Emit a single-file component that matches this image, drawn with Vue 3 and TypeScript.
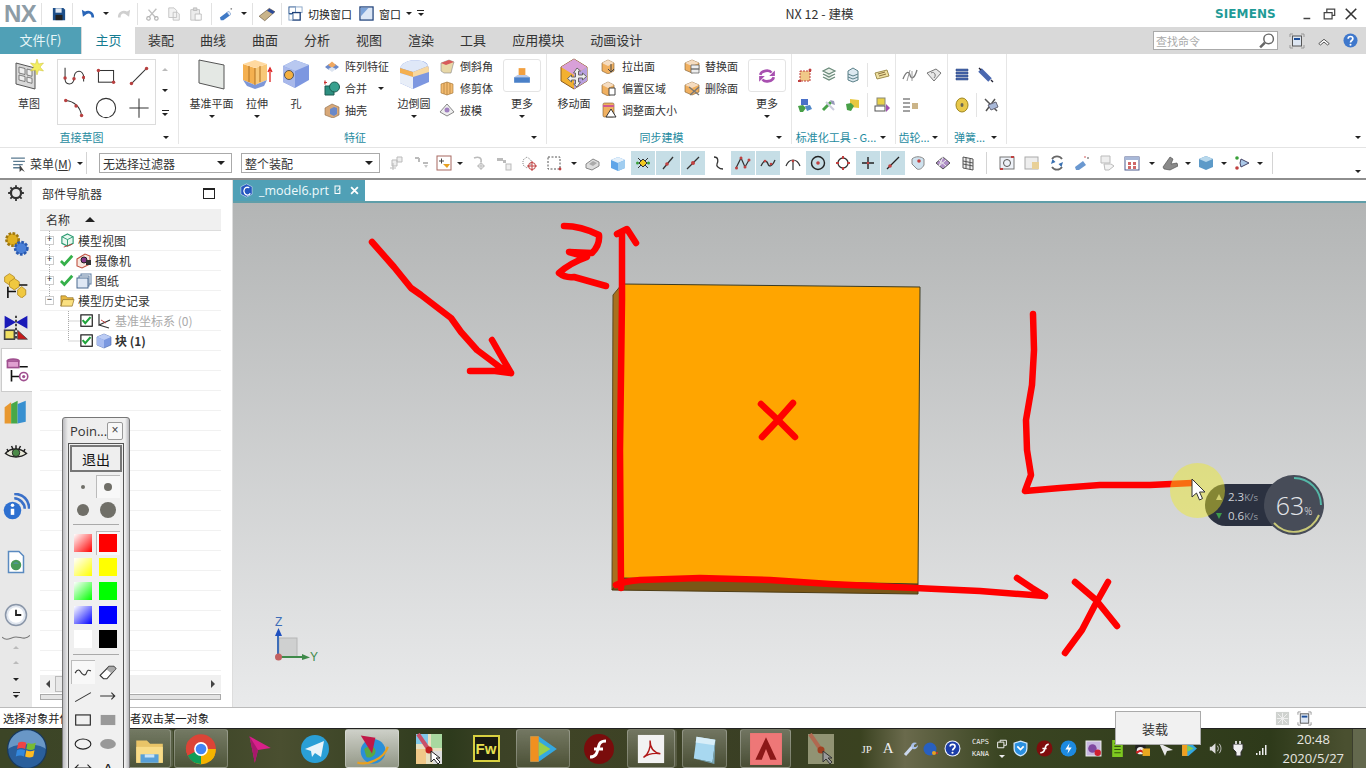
<template>
  <div class="app">
    <!-- title bar -->
    <header class="titlebar">
      <span class="nx">NX</span>
      <div class="qa qa-save"><Ico n="save" :s="14" /></div>
      <div class="qa qa-undo"><Ico n="undo" :s="14" /><i class="caret" /><Ico n="redo" :s="14" /></div>
      <div class="qa qa-clip"><Ico n="cut" :s="14" /><Ico n="copy" :s="14" /><Ico n="paste" :s="14" /></div>
      <div class="qa qa-brush"><Ico n="brush" :s="14" /><i class="caret" /></div>
      <div class="qa qa-roll"><Ico n="roll" :s="18" /></div>
      <div class="qa qa-win">
        <Ico n="switchWin" :s="15" />
        <span class="qa-text">切换窗口</span>
        <Ico n="winFrame" :s="15" class="qa-w2" />
        <span class="qa-text">窗口</span>
        <i class="caret" />
        <i class="overflow" />
      </div>
      <span class="apptitle">NX 12 - 建模</span>
      <span class="siemens">SIEMENS</span>
      <div class="winbtns">
        <Ico n="wMin" :s="12" />
        <Ico n="wRestore" :s="14" />
        <Ico n="wClose" :s="14" />
      </div>
    </header>

    <!-- ribbon tabs -->
    <nav class="tabs">
      <span class="tab-file">文件(F)</span>
      <span v-for="(t, i) in tabs" :key="t" class="tab" :class="{ on: i === 0 }">{{ t }}</span>
      <div class="tabs-right">
        <div class="search"><span>查找命令</span><Ico n="search" :s="17" /></div>
        <Ico n="fit" :s="16" />
        <Ico n="chev" :s="14" />
        <Ico n="help" :s="15" />
      </div>
    </nav>

    <!-- ribbon -->
    <section class="ribbon">
      <div class="group g1">
        <div class="gbody">
          <div class="lg w42"><Ico n="sketch" :s="32" /><span>草图</span></div>
          <div class="gallery">
            <span v-for="g in gallery" :key="g" class="gcell"><Ico :n="g" :s="22" /></span>
          </div>
          <div class="gscroll"><i class="caret up" /><i class="caret" /><i class="overflow" /></div>
        </div>
        <div class="glabel"><span>直接草图</span><i class="caret" /></div>
      </div>

      <div class="group g2">
        <div class="gbody">
          <div class="lg w44"><Ico n="plane" :s="32" /><span>基准平面</span><i class="caret" /></div>
          <div class="lg w46"><Ico n="extrude" :s="32" /><span>拉伸</span><i class="caret" /></div>
          <div class="lg w32"><Ico n="hole" :s="32" /><span>孔</span></div>
          <div class="col c1">
            <div class="sm"><Ico n="pattern" /><span>阵列特征</span></div>
            <div class="sm"><Ico n="unite" /><span>合并</span><i class="caret" /></div>
            <div class="sm"><Ico n="shell" /><span>抽壳</span></div>
          </div>
          <div class="lg w40"><Ico n="blend" :s="32" /><span>边倒圆</span><i class="caret" /></div>
          <div class="col c2">
            <div class="sm"><Ico n="chamfer" /><span>倒斜角</span></div>
            <div class="sm"><Ico n="trim" /><span>修剪体</span></div>
            <div class="sm"><Ico n="draft" /><span>拔模</span></div>
          </div>
          <div class="lg w38 more">
            <div class="morebox"><Ico n="stamp" :s="18" /></div>
            <span>更多</span><i class="caret" />
          </div>
        </div>
        <div class="glabel"><span>特征</span><i class="caret" /></div>
      </div>

      <div class="group g3">
        <div class="gbody">
          <div class="lg w50"><Ico n="moveFace" :s="32" /><span>移动面</span></div>
          <div class="col c3">
            <div class="sm"><Ico n="pull" /><span>拉出面</span></div>
            <div class="sm"><Ico n="offset" /><span>偏置区域</span></div>
            <div class="sm"><Ico n="resize" /><span>调整面大小</span></div>
          </div>
          <div class="col c4">
            <div class="sm"><Ico n="replace" /><span>替换面</span></div>
            <div class="sm"><Ico n="del" /><span>删除面</span></div>
          </div>
          <div class="lg w38 more">
            <div class="morebox"><Ico n="sync" :s="18" /></div>
            <span>更多</span><i class="caret" />
          </div>
        </div>
        <div class="glabel"><span>同步建模</span><i class="caret" /></div>
      </div>

      <div class="group g4">
        <div class="gbody icons2">
          <div class="irow"><Ico n="s1" /><Ico n="s2" /><Ico n="s3" /><i class="vsep" /><Ico n="s4" /></div>
          <div class="irow"><Ico n="s5" /><Ico n="s6" /><Ico n="s7" /><i class="vsep" /><Ico n="s8" /></div>
        </div>
        <div class="glabel"><span>标准化工具 - G...</span><i class="caret" /></div>
      </div>

      <div class="group g5">
        <div class="gbody icons2">
          <div class="irow"><Ico n="g1" /><Ico n="g2" /></div>
          <div class="irow"><Ico n="g3" /></div>
        </div>
        <div class="glabel"><span>齿轮...</span><i class="caret" /></div>
      </div>

      <div class="group g6">
        <div class="gbody icons2">
          <div class="irow"><Ico n="sp1" /><Ico n="sp2" /></div>
          <div class="irow"><Ico n="sp3" /><i class="vsep" /><Ico n="sp4" /></div>
        </div>
        <div class="glabel"><span>弹簧...</span><i class="caret" /></div>
      </div>

      <div class="gend"><i class="caret" /></div>
    </section>

    <!-- selection bar -->
    <section class="selbar">
      <Ico n="menu" :s="17" />
      <span class="menu-text">菜单(<u>M</u>)</span>
      <i class="caret" />
      <i class="tsep first" />
      <div class="combo c-a"><span>无选择过滤器</span><i class="caret" /></div>
      <div class="combo c-b"><span>整个装配</span><i class="caret" /></div>
      <div class="tools">
        <template v-for="(t, i) in tools" :key="i">
          <i v-if="t === '|'" class="tsep" />
          <i v-else-if="t === 'v'" class="caret tcaret" />
          <span v-else class="tcell" :class="toolClass(t)"><Ico :n="toolName(t)" /></span>
        </template>
      </div>
      <i class="caret end" />
    </section>

    <!-- main area -->
    <main class="main">
      <aside class="rail">
        <span class="r-gear"><Ico n="rGear" :s="18" /></span>
        <span class="r-blank" />
        <span><Ico n="rAsm" :s="28" /></span>
        <span><Ico n="rCon" :s="26" /></span>
        <span><Ico n="rBow" :s="26" /></span>
        <span class="r-on"><Ico n="rPart" :s="26" /></span>
        <span><Ico n="rBook" :s="26" /></span>
        <span><Ico n="rEye" :s="24" /></span>
        <span><Ico n="rInfo" :s="28" /></span>
        <span><Ico n="rDoc" :s="24" /></span>
        <span class="r-blank2" />
        <span><Ico n="rClock" :s="24" /></span>
        <span class="r-wave"><Ico n="rWave" :s="28" /></span>
        <span class="r-sm"><i class="caret up" /></span>
        <span class="r-sm"><i class="caret up" /></span>
        <span class="r-sm"><i class="caret" /></span>
        <span class="r-sm"><i class="overflow" /></span>
      </aside>

      <div class="nav">
        <div class="nav-title"><span>部件导航器</span><i class="nav-max" /></div>
        <div class="tree">
          <div class="tree-head"><span>名称</span><i class="caret up dark" /></div>
          <div class="tree-body">
            <svg class="tree-lines" width="60" height="120" viewBox="0 0 60 120">
              <path d="M9.5 0V70M28.5 80V110M28.5 90H40M28.5 110H40" stroke="#aaa" stroke-dasharray="1 1" fill="none" />
            </svg>
            <div v-for="(r, i) in rows" :key="i" class="row" :class="[r.cls]">
              <template v-if="r.text">
                <b v-if="r.exp" class="exp">{{ r.exp }}</b>
                <Ico v-if="r.check" :n="r.check" :s="14" />
                <Ico :n="r.icon" :s="r.check ? 16 : 15" />
                <span class="row-text">{{ r.text }}</span>
              </template>
            </div>
          </div>
          <div class="hscroll"><i class="tri l" /><i class="thumb" /><i class="tri r" /></div>
          <div class="hfoot" />
        </div>
      </div>

      <div class="view">
        <div class="doc-tabs">
          <div class="doc-tab">
            <Ico n="prt" :s="15" />
            <span>_model6.prt</span>
            <Ico n="docEdit" :s="11" />
            <Ico n="docX" :s="9" />
          </div>
        </div>
        <div class="canvas" />
      </div>
    </main>

    <!-- status bar -->
    <footer class="status">
      <span>选择对象并使用 MB3，或者双击某一对象</span>
      <div class="status-r"><Ico n="stGrid" :s="15" /><Ico n="fit" :s="15" /></div>
    </footer>

    <!-- taskbar -->
    <div class="taskbar">
      <span class="orb"><Ico n="orb" :s="40" /></span>
      <span class="tb-btn t-exp framed"><Ico n="tFolder" :s="34" /></span>
      <span class="tb-btn t-chrome framed"><Ico n="tChrome" :s="34" /></span>
      <span class="tb-btn"><Ico n="tPlane" :s="34" /></span>
      <span class="tb-btn"><Ico n="tTele" :s="32" /></span>
      <span class="tb-btn framed active"><Ico n="tGlobe" :s="36" /></span>
      <span class="tb-btn"><Ico n="tMap" :s="32" /></span>
      <span class="tb-btn"><span class="fw">Fw</span></span>
      <span class="tb-btn t-play framed"><Ico n="tPlay" :s="34" /></span>
      <span class="tb-btn t-flash"><Ico n="tFlash" :s="32" /></span>
      <span class="tb-btn t-pdf framed"><Ico n="tPdf" :s="30" /></span>
      <span class="tb-btn t-note framed"><Ico n="tNote" :s="30" /></span>
      <span class="tb-btn t-cad framed"><Ico n="tCad" :s="34" /></span>
      <span class="tb-btn t-map2"><Ico n="tMap2" :s="32" /></span>

      <div class="tray">
        <span class="tr-a tr-jp">JP</span>
        <span class="tr-a tr-capA">A</span>
        <span class="tr-a"><Ico n="trWrench" :s="16" /></span>
        <span class="tr-a"><Ico n="trDot" :s="16" /></span>
        <span class="tr-a"><Ico n="trHelp" :s="17" /></span>
        <span class="tr-caps"><b>CAPS</b><b>KANA</b></span>
        <span class="tr-capsico"><Ico n="trWin" :s="10" /><i class="caret white" /></span>
        <span class="tr-b"><Ico n="trShield" :s="17" /></span>
        <span class="tr-b"><Ico n="trFlash" :s="17" /></span>
        <span class="tr-b"><Ico n="trSwirl" :s="17" /></span>
        <span class="tr-b"><Ico n="trMusic" :s="17" /></span>
        <span class="tr-b"><Ico n="trBook" :s="17" /></span>
        <span class="tr-b"><Ico n="trQQ" :s="17" /></span>
        <span class="tr-b"><Ico n="trPlane" :s="16" /></span>
        <span class="tr-b"><Ico n="trPlay" :s="17" /></span>
        <span class="tr-b"><Ico n="trSpk" :s="15" /></span>
        <span class="tr-b"><Ico n="trPow" :s="16" /></span>
        <span class="tr-b"><Ico n="trSig" :s="16" /></span>
      </div>
      <div class="clock"><span>20:48</span><span>2020/5/27</span></div>
      <span class="showdesk" />
    </div>

    <!-- model and hand drawn marks in the graphics window -->
    <svg class="scene" width="1366" height="768" viewBox="0 0 1366 768">
      <path d="M613 295L622 284V578L612 590Z" fill="#a8701f" stroke="#5c4a20" />
      <path d="M612 590L622 578L918 584V594Z" fill="#7a5616" stroke="#4d3c14" />
      <path d="M622 284L920 287L918 584L622 578Z" fill="#ffa500" stroke="#3a3a22" />

      <g class="triad">
        <rect x="279" y="638" width="18" height="19" fill="#cfd0d0" stroke="#b5b6b6" />
        <path d="M278 657V632" stroke="#3d6db8" stroke-width="2" />
        <path d="M275 636L278.5 628L282 636Z" fill="#1f50c0" />
        <path d="M278 657H304" stroke="#3f8a4a" stroke-width="2" />
        <path d="M302 654L310 657.5L302 660Z" fill="#3f8a4a" />
        <circle cx="278.5" cy="657" r="3.5" fill="#c26060" />
        <text x="275" y="626" class="tz">Z</text>
        <text x="310" y="661" class="ty">Y</text>
      </g>

      <g class="ink">
        <path d="M372 242L394 267L411 288L421 295L434 305L451 318L461 332L477 350L501 368L511 373M470 371L495 371L511 373M492 340L500 354L511 373" />
        <path d="M564 226Q581 226 599 235Q600 245 592 253L569 252L587 257Q570 263 559 273Q565 278 574 277L606 286" />
        <path d="M621 588L620 450L622 300L622 233M617 234L627 229L636 243" />
        <path d="M616 585Q625 581 640 580L700 578L770 580L830 584L915 588L980 591L1045 596M1017 578L1032 588L1045 596" />
        <path d="M1075 582L1096 600L1117 626M1108 582L1095 605L1082 630L1065 653" />
        <path d="M761 404L778 420L795 437M793 403L778 420L762 437" />
        <path d="M1033 314L1034 350L1032 385L1026 420L1027 450L1031 475L1025 491L1060 488L1100 485L1150 485L1192 483" />
      </g>
    </svg>

    <!-- network meter -->
    <div class="meter">
      <div class="meter-rates">
        <div class="rate"><i class="arrow up" /><span>2.3<small>K/s</small></span></div>
        <div class="rate"><i class="arrow" /><span>0.6<small>K/s</small></span></div>
      </div>
      <div class="meter-dial">
        <svg width="60" height="60" viewBox="0 0 60 60">
          <path d="M30 3A27 27 0 0 1 57 30" stroke="#55b8a8" stroke-width="2" fill="none" />
          <path d="M55 40A27 27 0 0 1 10 48" stroke="#c8c878" stroke-width="2" fill="none" />
        </svg>
        <span>63<small>%</small></span>
      </div>
    </div>
    <div class="spot" />
    <svg class="cursor" width="16" height="24" viewBox="0 0 16 24">
      <path d="M1 1V19L5.5 15L8.5 22L11.5 20.5L8.5 14H14Z" fill="#fff" stroke="#333" />
    </svg>

    <!-- pointofix palette -->
    <div class="palette">
      <div class="pal-title"><span>Poin...</span><i class="pal-close">×</i></div>
      <div class="pal-inner">
        <button class="pal-exit">退出</button>
        <div class="pal-grid">
          <span class="cell"><i class="dot d1" /></span>
          <span class="cell sel"><i class="dot d2" /></span>
          <span class="cell"><i class="dot d3" /></span>
          <span class="cell"><i class="dot d4" /></span>
        </div>
        <hr />
        <div class="pal-grid swatches">
          <template v-for="(c, i) in swatches" :key="i">
            <span class="cell"><i class="sw" :style="{ background: c[0] }" /></span>
            <span class="cell" :class="{ sel: i === 0 }"><i class="sw" :style="{ background: c[1] }" /></span>
          </template>
        </div>
        <hr />
        <div class="pal-grid pal-tools">
          <span class="cell sel"><Ico n="pSquig" :s="18" /></span>
          <span class="cell"><Ico n="pErase" :s="18" /></span>
          <span class="cell"><Ico n="pLine" :s="18" /></span>
          <span class="cell"><Ico n="pArrow" :s="18" /></span>
          <span class="cell"><Ico n="pRect" :s="18" /></span>
          <span class="cell"><Ico n="pRectF" :s="18" /></span>
          <span class="cell"><Ico n="pOval" :s="18" /></span>
          <span class="cell"><Ico n="pOvalF" :s="18" /></span>
          <span class="cell"><Ico n="pBoth" :s="18" /></span>
          <span class="cell pal-a">A</span>
        </div>
      </div>
    </div>

    <div class="tooltip">装载</div>
  </div>
</template>

<script setup lang="ts">
import { h } from 'vue'

// every icon is 16 units unless it is listed in big (32 units)
const ic: Record<string, string> = {
  save: '<path fill="#1d4f8a" d="M1 1h12l2 2v12H1z"/><rect x="4" y="1.5" width="7" height="5" fill="#dfe8f2"/><rect x="4" y="9" width="8" height="6" fill="#222"/>',
  undo: '<path d="M13.5 12C13.5 6.5 9 4.5 4.5 7" stroke="#2a66b8" stroke-width="3" fill="none"/><path d="M1 3l1.2 8 5.6-4z" fill="#2a66b8"/>',
  redo: '<path d="M2.5 12C2.5 6.5 7 4.5 11.500 7" stroke="#cfcfcf" stroke-width="3" fill="none"/><path d="M15 3l-1.200 8-5.600-4z" fill="#cfcfcf"/>',
  cut: '<path d="M13 2L5 11M4 3l8 9" stroke="#c0c0c0" stroke-width="1.6"/><circle cx="4" cy="13" r="2" fill="none" stroke="#b0b0b0" stroke-width="1.300"/><circle cx="13" cy="13" r="2" fill="none" stroke="#b0b0b0" stroke-width="1.300"/>',
  copy: '<path d="M2 1h6l3 3v8H2zM7 6h5l2 2v7H7z" fill="#f2f2f2" stroke="#c0c0c0"/>',
  paste: '<path d="M2 3h10v12H2z" fill="#ececec" stroke="#c0c0c0"/><path d="M5 1h4v3H5z" fill="#d8d8d8" stroke="#bbb"/><path d="M7 8h7v7H7z" fill="#fafafa" stroke="#bbb"/>',
  brush: '<path d="M1 12l8-6 3 4-7 5H2z" fill="#3f79c6"/><path d="M9 6l3 4 1.500-2-2-3z" fill="#e6efff" stroke="#3a6db0" stroke-width=".5"/><circle cx="14" cy="2" r="1" fill="#888"/>',
  roll: '<path d="M1 10l9-7 5 3-9 8z" fill="#c9b48a" stroke="#6a5a40" stroke-width=".6"/><path d="M8 5l5 3 2-2-5-3z" fill="#2c4b9a"/>',
  switchWin: '<rect x="1" y="1" width="7" height="7" fill="#fff" stroke="#28558f"/><rect x="8" y="1" width="7" height="6" fill="#fff" stroke="#8aa6c7"/><rect x="5" y="7" width="8" height="8" fill="#fff" stroke="#1c3f78" stroke-width="1.400"/><rect x="1" y="9" width="4" height="6" fill="#fff" stroke="#8aa6c7"/>',
  winFrame: '<rect x="1" y="1" width="14" height="14" fill="#dbe6f5" stroke="#1c3f78" stroke-width="1.300"/><path d="M2 2h8L2 11z" fill="#7aa2d8"/>',
  wMin: '<path d="M2 14h9" stroke="#444" stroke-width="2"/>',
  wRestore: '<path d="M2.500 6.500h9v7h-9zM5.500 6V2.500h9v7H12" fill="none" stroke="#444" stroke-width="1.400"/>',
  wClose: '<path d="M2 2l12 12M14 2L2 14" stroke="#333" stroke-width="1.800"/>',
  search: '<circle cx="10" cy="6.500" r="4.500" fill="#fff" stroke="#666" stroke-width="1.400"/><path d="M6.500 10L2 14.500" stroke="#666" stroke-width="2.400"/>',
  fit: '<path d="M1 4V1h3M12 1h3v3M15 12v3h-3M4 15H1v-3" fill="none" stroke="#999"/><rect x="3.500" y="3" width="9" height="10" fill="#dde6f2" stroke="#555"/><rect x="5" y="5" width="6" height="2" fill="#1d4f9a"/>',
  chev: '<path d="M2 11l6-5 6 5-2 1.500-4-3.300-4 3.300z" fill="#fff" stroke="#444" stroke-width="1"/>',
  help: '<circle cx="8" cy="8" r="7.500" fill="#3f78cc"/><path d="M5.500 6c0-3 5-3 5 0 0 2-2.500 2-2.500 4" stroke="#fff" stroke-width="1.800" fill="none"/><circle cx="8" cy="12.500" r="1.100" fill="#fff"/>',
  pattern: '<path d="M1 9l4-3 4 3-4 3z" fill="#6a88c8"/><path d="M7 9l4-3 4 3-4 3z" fill="#6a88c8"/><path d="M4 7l4-3.500L12 7 8 10z" fill="#f0a860"/><path d="M4 11l4 3 4-3-4-2z" fill="#dce4f0"/>',
  unite: '<path d="M1 6h9v9H1z" fill="#2d8f80" stroke="#1d5a50"/><circle cx="10.500" cy="7" r="5" fill="#38a08e" stroke="#1d5a50"/><path d="M1 0.500v4M-1 2.500h4" stroke="#c33" stroke-width="1.200"/>',
  shell: '<path d="M1 6l7-4 7 3v8l-6 3-8-3z" fill="#d8a878" stroke="#8a6a48" stroke-width=".6"/><path d="M6 7l4-2 3 1v6l-3 2-4-2z" fill="#6a88c8"/>',
  chamfer: '<path d="M2 5l8-3 5 2-1 3-2 8H5L2 13z" fill="#e8d8a8" stroke="#888" stroke-width=".6"/><path d="M2 5l8-3 5 2-8 3z" fill="#d85a5a"/>',
  trim: '<path d="M2 4l6-2 6 2v9l-6 2-6-2z" fill="#f3bb70" stroke="#a07030" stroke-width=".6"/><path d="M8 2v13M11 3v11M5 3v11" stroke="#a07030" stroke-width=".6"/>',
  draft: '<path d="M8 2l7 8-7 4-7-4z" fill="#eee" stroke="#888"/><circle cx="8" cy="8" r="2.500" fill="#a080c0"/>',
  pull: '<path d="M1 5l6-3 6 3v8l-6 3-6-3z" fill="#f0b060" stroke="#7a5a30" stroke-width=".6"/><path d="M7 2l6 3-6 3-6-3z" fill="#f5dcc0"/><path d="M10 6v8M7 11l3 3 3-3" stroke="#444" fill="none"/>',
  offset: '<path d="M1 5l6-3 6 3v8l-6 3-6-3z" fill="#f0b060" stroke="#7a5a30" stroke-width=".6"/><path d="M7 2l6 3-6 3-6-3z" fill="#f5dcc0"/><path d="M8 8h6v7H8z" fill="#fff" stroke="#444"/>',
  resize: '<rect x="2" y="1" width="11" height="14" rx="1.500" fill="#f0b060" stroke="#7a5a30" stroke-width=".6"/><path d="M2 4h11" stroke="#d05a90" stroke-width="2"/><path d="M5 15l5-8 5 8z" fill="#fff" stroke="#333"/>',
  replace: '<path d="M1 5l7-3 7 3v7l-7 3-7-3z" fill="#f0b060" stroke="#7a5a30" stroke-width=".6"/><path d="M8 2l7 3-7 3-7-3z" fill="#f5dcc0"/><path d="M7 7h8v4H7zM7 11h8v4H7z" fill="#eee" stroke="#555" stroke-width=".7"/>',
  del: '<path d="M1 5l7-3 7 3v7l-7 3-7-3z" fill="#f0b060" stroke="#7a5a30" stroke-width=".6"/><path d="M8 2l7 3-7 3-7-3z" fill="#f5dcc0"/><path d="M5 7l10 8M15 7L6 15" stroke="#777" stroke-width="1.300"/>',
  stamp: '<path d="M5 1h6v7H5z" fill="#f2a040"/><path d="M1 9h14v5H1z" fill="#4a80c8"/><path d="M1 9l3-2h8l3 2z" fill="#b8c8e8"/>',
  sync: '<path d="M2 7c1-4 8-5 10-2" stroke="#a850b0" stroke-width="2.400" fill="none"/><path d="M15 3v5h-5z" fill="#a850b0"/><path d="M14 9c-1 4-8 5-10 2" stroke="#a850b0" stroke-width="2.400" fill="none"/><path d="M1 13V8h5z" fill="#a850b0"/>',
  s1: '<rect x="3" y="4" width="10" height="10" fill="#f0c888" stroke="#c04040" stroke-dasharray="2 1"/><path d="M1 14h3M13 2v3" stroke="#c04040" stroke-width="2"/><circle cx="13" cy="3" r="1.500" fill="#c04040"/>',
  s2: '<path d="M8 1l6 3-6 3-6-3zM2 7l6 3 6-3M2 10l6 3 6-3" fill="#e8efe8" stroke="#6a8a7a" stroke-width="1.200"/>',
  s3: '<path d="M3 4l5-3 5 3v9l-5 2-5-2z" fill="#dce8f0" stroke="#5a8088"/><path d="M3 7l5 2 5-2M3 10l5 2 5-2" fill="none" stroke="#5a8088"/>',
  s4: '<path d="M1 6l12-3 2 6-12 3z" fill="#efe0a0" stroke="#a09050"/><path d="M4 7l7-2M5 9l7-2" stroke="#887040"/>',
  s5: '<path d="M4 2h7v6H4z" fill="#4a70c8"/><path d="M1 9l5-1 3 3-3 4H3z" fill="#48a048"/><path d="M8 9l5-1 2 4-5 2z" fill="#5088c8"/>',
  s6: '<path d="M2 13L10 5" stroke="#48a048" stroke-width="3"/><path d="M9 3l4 1 1 4-3-1z" fill="#99b"/><path d="M5 5l8 8" stroke="#ccd" stroke-width="2"/>',
  s7: '<path d="M5 2l9 1v8l-9-1z" fill="#e8c840"/><path d="M1 7l5-1 3 3-3 5-4-1z" fill="#48a048"/>',
  s8: '<rect x="3" y="1" width="8" height="7" fill="#e8d048" stroke="#887"/><rect x="1" y="9" width="10" height="5" fill="#fff" stroke="#555"/><path d="M12 7l4 4-4 4z" fill="#a050b0"/>',
  g1: '<path d="M1 12C4 4 7 4 8 8s4 5 7-5" fill="none" stroke="#777" stroke-width="1.300"/><path d="M5 14L8 3M10 14V4" stroke="#999"/>',
  g2: '<path d="M1 6l9-4 5 4-7 8z" fill="#e8e8e8" stroke="#777"/><path d="M5 6c3-2 6 2 3 5" stroke="#777" fill="none"/>',
  g3: '<path d="M1 2h7M1 6h7M1 10h7M1 14h7" stroke="#444"/><path d="M10 6h6v6h-6z" fill="#cbb488"/>',
  sp1: '<path d="M2 2h12v2H2zM2 5h12v2H2zM2 8h12v2H2zM2 11h12v2H2z" fill="#4a68b0" stroke="#26407a" stroke-width=".5"/>',
  sp2: '<path d="M2 3l10 10" stroke="#4a68b0" stroke-width="5"/><path d="M1 1l2 2M13 13l2 2" stroke="#223" stroke-width="1.400"/>',
  sp3: '<ellipse cx="8" cy="8" rx="6" ry="7" fill="#e8c84a" stroke="#a08820"/><ellipse cx="8" cy="8" rx="1.500" ry="2" fill="#665"/>',
  sp4: '<path d="M2 2l12 12M12 2L3 14" stroke="#555" stroke-width="1.500"/><path d="M5 8l8-3 2 5-7 3z" fill="#a8b8d8" stroke="#667"/>',
  menu: '<path d="M1 3h13M3 6h11M3 9h9M3 12h7" stroke="#5a7a90" stroke-width="1.200"/><path d="M9 9v7l2-2 3 2" fill="#444"/>',
  t1: '<path d="M3 5h5v6H3zM8 2h5v5H8z" fill="#eee" stroke="#bbb"/><path d="M1 13h6M4 8v7" stroke="#bbb"/>',
  t2: '<path d="M1 3h4M9 8h5M5 3v4" stroke="#bbb" stroke-width="2"/><path d="M10 10l4 0-2 3z" fill="#c8c8c8"/>',
  t3: '<rect x="1" y="1" width="14" height="14" fill="#fff" stroke="#a86860"/><path d="M3 6h5M5.500 3.500v5" stroke="#444"/><path d="M7 9h7l-3 4z" fill="#e8a020"/>',
  t4: '<path d="M3 3C8 1 11 3 10 7" stroke="#bbb" fill="none" stroke-width="1.500"/><path d="M10 6v9M6 11h8" stroke="#bbb"/><circle cx="10" cy="11" r="2.500" fill="none" stroke="#bbb"/>',
  t5: '<path d="M1 3h6v3H1zM7 5h3v3H7z" fill="#bbb"/><rect x="10" y="9" width="5" height="6" fill="#eee" stroke="#bbb"/>',
  t6: '<path d="M2 5l4-3 4 3v5l-4 3-4-3z" fill="none" stroke="#888" stroke-dasharray="1 1"/><circle cx="11" cy="11" r="3.500" fill="none" stroke="#c04040"/><path d="M11 6v10M6 11h10" stroke="#c04040"/>',
  t7: '<rect x="2" y="2" width="12" height="12" fill="none" stroke="#555" stroke-dasharray="2 1.500"/><circle cx="14" cy="14" r="1.400" fill="#c04040"/>',
  t8: '<path d="M1 9l7-5 6 3v4l-7 4-6-2z" fill="#ddd" stroke="#888"/><path d="M4 9l4-3 4 2-4 3z" fill="#aaa"/>',
  t9: '<path d="M1 5l7-3 7 3v8l-7 3-7-3z" fill="#5fa5e8"/><path d="M1 5l7-3 7 3-7 3z" fill="#e4f0fa"/><path d="M8 8v8l7-3V5z" fill="#a0cdf0"/>',
  t10: '<path d="M8 8L3 3M8 8l5-5M8 8L3 13M8 8l5 5" stroke="#333"/><path d="M8 4l4 4-4 4-4-4z" fill="#f0c820" stroke="#333"/><circle cx="2.500" cy="8" r="1.500" fill="#38a038"/><circle cx="13.500" cy="8" r="1.500" fill="#38a038"/>',
  t11: '<path d="M3 14L13 2" stroke="#333" stroke-width="1.300"/><circle cx="7" cy="9" r="1.800" fill="#c04040"/>',
  t12: '<path d="M2 14L14 2" stroke="#333" stroke-width="1.300"/><circle cx="8" cy="8" r="2" fill="#c04040"/>',
  t13: '<path d="M4 2c5 0 4 5 3 7s2 5 6 5" stroke="#333" stroke-width="1.300" fill="none"/>',
  t14: '<path d="M1 13L6 3l4 9 4-7" stroke="#333" fill="none" stroke-width="1.200"/><circle cx="6" cy="3" r="1.500" fill="#c04040"/><circle cx="10" cy="12" r="1.500" fill="#c04040"/><circle cx="1.500" cy="13" r="1.500" fill="#c04040"/><circle cx="14" cy="5" r="1.500" fill="#c04040"/>',
  t15: '<path d="M1 11c3-7 6-5 7-2s4 3 7-4" stroke="#333" stroke-width="1.300" fill="none"/><circle cx="5" cy="6" r="1.300" fill="#c04040"/><circle cx="11" cy="9" r="1.300" fill="#c04040"/>',
  t16: '<path d="M8 7v8M1 11C3 6 5 5 8 5s5 1 7 6" stroke="#333" fill="none" stroke-width="1.200"/><circle cx="8" cy="6" r="1.300" fill="#c04040"/>',
  t17: '<circle cx="8" cy="8" r="6.500" fill="none" stroke="#222" stroke-width="1.400"/><circle cx="8" cy="8" r="1.800" fill="#c04040"/>',
  t18: '<circle cx="8" cy="8" r="5" fill="none" stroke="#333" stroke-width="1.300"/><path d="M1 8h3M12 8h3M8 1v3M8 12v3" stroke="#c04040" stroke-width="2"/>',
  t19: '<path d="M2 8h12M8 2v12" stroke="#222" stroke-width="1.400"/><circle cx="8" cy="8" r="1.300" fill="#c04040"/>',
  t20: '<path d="M2 14L14 2" stroke="#222" stroke-width="1.300"/><circle cx="5" cy="11" r="1.800" fill="#c04040"/>',
  t21: '<path d="M2 4c3-3 9-3 12 0v6c-2 4-5 5-7 4l-5-5z" fill="#cfe2ee" stroke="#888"/><circle cx="9" cy="6" r="1.800" fill="#c04040"/>',
  t22: '<path d="M1 8l7-6 7 6-7 6z" fill="#b090c8" stroke="#555"/><path d="M4 5l7 6M8 2l-4 9M11 5l-7 6" stroke="#eee"/>',
  t23: '<path d="M3 2l10 2v11L3 13z" fill="#eee" stroke="#555"/><path d="M3 6l10 2M3 9l10 2M6 2.500v11M10 3.500v11" stroke="#555"/>',
  t24: '<rect x="1" y="2" width="14" height="12" fill="#eef2f8" stroke="#777"/><circle cx="8" cy="8" r="3.500" fill="none" stroke="#555"/><path d="M1 14h3M12 2h3" stroke="#c04040" stroke-width="2"/>',
  t25: '<rect x="1" y="2" width="13" height="12" fill="#eee" stroke="#aaa"/><path d="M8 7h7v7H8z" fill="#e8d098"/>',
  t26: '<path d="M3 4a6 6 0 0 1 10 0M13 12a6 6 0 0 1-10 0" fill="none" stroke="#666" stroke-width="1.800"/><path d="M2 9l1.500-5 3 3zM14 7l-1.500 5-3-3z" fill="#3a70b0"/>',
  t27: '<path d="M1 12l8-6 3 4-7 5H2z" fill="#6a98d0"/><circle cx="14" cy="3" r="1" fill="#888"/><circle cx="11" cy="2" r=".8" fill="#c44"/>',
  t28: '<path d="M2 1h9v7H2z" fill="#eee" stroke="#bbb"/><path d="M5 9h7l3 2-5 4H6z" fill="#f3f3f3" stroke="#bbb"/>',
  t29: '<rect x="1" y="2" width="14" height="13" fill="#fff" stroke="#4c5a8c"/><rect x="1" y="2" width="14" height="3" fill="#a8b8d8"/><path d="M4 7h3v3H4zM9 7h3v3H9zM4 11h3v3H4zM9 11h3v3H9z" fill="#d06868"/>',
  t30: '<path d="M1 12L8 2l3 2-2 5 6-1 1 3-8 4-6-1z" fill="#8a8a8a" stroke="#444" stroke-width=".6"/>',
  t31: '<path d="M8 1l7 3v8l-7 3-7-3V4z" fill="#5d9ac8"/><path d="M8 1l7 3-7 3-7-3z" fill="#b8d8ec"/>',
  t32: '<path d="M7 4l8 4-8 4-1-4z" fill="#aac8e8" stroke="#446"/><circle cx="3" cy="3" r="1.800" fill="#38a038"/><circle cx="3" cy="13" r="1.800" fill="#c04040"/>',
  check: '<path d="M1 8l4 4 9-10" stroke="#35b04a" stroke-width="3.200" fill="none"/>',
  box: '<rect x="1" y="1" width="13" height="13" fill="#fff" stroke="#111" stroke-width="1.300"/><path d="M3 7l3 3.500 6-7" stroke="#1fa33a" stroke-width="2.400" fill="none"/>',
  views: '<path d="M8 1l6 3v7l-6 3-6-3V4z" fill="#e8f8f0" stroke="#2a9a70" stroke-width="1.200"/><path d="M2 4l6 3 6-3M8 7v7" stroke="#2a9a70" fill="none"/><path d="M4 15l9-3" stroke="#c04040"/>',
  cam: '<path d="M1 6l8-5 5 2v8l-8 4-5-2z" fill="#f8e8e0" stroke="#c05040" stroke-width="1.100"/><circle cx="8" cy="7" r="3" fill="#883888" stroke="#222"/><rect x="10" y="7" width="5" height="5" fill="#333"/>',
  drawing: '<rect x="5" y="1" width="10" height="10" fill="#fff" stroke="#5a7aa0"/><rect x="3" y="3" width="10" height="10" fill="#fff" stroke="#5a7aa0"/><rect x="1" y="5" width="11" height="10" fill="#dfe8f4" stroke="#4a6a90"/>',
  folder: '<path d="M1 3h5l2 2h6v3H3L1 14z" fill="#e8b840" stroke="#8a6a20" stroke-width=".7"/><path d="M3 7h12l-2 7H1z" fill="#fae080" stroke="#8a6a20" stroke-width=".7"/>',
  csys: '<path d="M3 1v11l11-5M3 12l10 3" stroke="#333" fill="none" stroke-width="1.200"/><path d="M5 7l5 3" stroke="#c04040"/>',
  block: '<path d="M8 1l7 3v8l-7 3-7-3V4z" fill="#7b98e0" stroke="#4c68a8" stroke-width=".6"/><path d="M1 4l7 3 7-3-7-3z" fill="#bcccf4"/><path d="M1 4l7 3v8l-7-3z" fill="#a8bcf0"/>',
  prt: '<path d="M8 1l6 3v8l-6 3-6-3V4z" fill="#2456c0" stroke="#fff" stroke-width=".5"/><path d="M11 5C6 3 4 8 6 11s5 2 6 0" stroke="#fff" stroke-width="1.400" fill="none"/>',
  docEdit: '<path d="M1.500 1.500h7v11h-7z" fill="none" stroke="#fff" stroke-width="1.500"/><path d="M5 8l4-4" stroke="#fff" stroke-width="1.500"/>',
  docX: '<path d="M2 2l12 12M14 2L2 14" stroke="#fff" stroke-width="3.200"/>',
  stGrid: '<rect x="1" y="1" width="14" height="14" fill="#cfd2cf"/><path d="M3 3l10 10M13 3L3 13M8 2v12M2 8h12" stroke="#f0f0f0"/>',
  rGear: '<circle cx="8" cy="8" r="4.500" fill="none" stroke="#333" stroke-width="2"/><path d="M8 1v3M8 12v3M1 8h3M12 8h3M3 3l2 2M11 11l2 2M13 3l-2 2M5 11l-2 2" stroke="#333" stroke-width="1.600"/>',
  rAsm: '<circle cx="6" cy="6" r="3.500" fill="#e0b020" stroke="#a07810" stroke-width="1.500" stroke-dasharray="1.500 .8"/><circle cx="11" cy="11" r="3.500" fill="#4a80d8" stroke="#2a5ab0" stroke-width="1.500" stroke-dasharray="1.500 .8"/>',
  rCon: '<path d="M1 3l3-2 3 2v3l-3 2-3-2z" fill="#f0c840" stroke="#b08820" stroke-width=".5"/><path d="M4 6l3-2 3 2v3l-3 2-3-2z" fill="#f0c840" stroke="#b08820" stroke-width=".5"/><path d="M9 11l2.500-2 2.500 2v3l-2.500 2L9 14z" fill="#f0c840" stroke="#b08820" stroke-width=".5"/><path d="M3 9v7M3 12h5M10 8h5" stroke="#111"/>',
  rBow: '<path d="M1 1l7 4-7 4zM15 1L8 5l7 4z" fill="#1a1ab8"/><path d="M8 1v15" stroke="#222" stroke-dasharray="1.500 1"/><rect x="1" y="10" width="6" height="5.500" fill="#f0e060" stroke="#444"/><path d="M9 10l6 5.500H9z" fill="#c81818" stroke="#444" stroke-width=".5"/>',
  rPart: '<ellipse cx="5" cy="2.500" rx="3.500" ry="1.200" fill="#e0a0d0" stroke="#a05090"/><rect x="1.500" y="2.500" width="7" height="4" fill="#e0a0d0" stroke="#a05090"/><path d="M4 8v7M4 12h5M9 6h5" stroke="#111"/><circle cx="11.500" cy="12" r="2.500" fill="none" stroke="#a05090"/><circle cx="11.500" cy="12" r="1" fill="#a05090"/>',
  rBook: '<path d="M1 5l4-3v13l-4 0z" fill="#e89830"/><path d="M5 3l4-2v14H5z" fill="#48a848"/><path d="M9 3l5-2v13l-5 1z" fill="#3890d0"/>',
  rEye: '<path d="M1 9c3-4 10-4 14 0-4 3-10 3-14 0z" fill="#e8e8d8" stroke="#222"/><circle cx="8" cy="8.500" r="2.500" fill="#4a8a48" stroke="#222" stroke-width=".6"/><path d="M2 6l1 2M5 4l1 2M8 3.500V6M11 4l-1 2M14 6l-1 2" stroke="#222"/>',
  rInfo: '<path d="M7 3c3 0 6 3 6 6M7 .5c5 0 8.500 3.500 8.500 8.500" fill="none" stroke="#3a70c8" stroke-width="1.500"/><circle cx="6" cy="10" r="5" fill="#2e70d0"/><path d="M6 9v3.500" stroke="#fff" stroke-width="2"/><circle cx="6" cy="7" r="1" fill="#fff"/>',
  rDoc: '<path d="M3 1h7l3 3v11H3z" fill="#fff" stroke="#5a8ac0"/><circle cx="8" cy="10" r="3.500" fill="#489a58"/><path d="M6 9a3 2 0 0 1 4 0z" fill="#5a90d0"/>',
  rClock: '<circle cx="8" cy="8" r="7" fill="#dfe5ee" stroke="#8a96a8"/><circle cx="8" cy="8" r="5.200" fill="#fff"/><path d="M8 4.500V8h3.500" stroke="#222" stroke-width="1.200" fill="none"/>',
  rWave: '<path d="M0 8c3 3 5 0 8 0s5 2 8-1" fill="none" stroke="#777" stroke-width=".6"/>',
  pSquig: '<path d="M1 9c2-4 4-3 5-1s4 4 5 1 2-3 4-2" stroke="#333" fill="none"/>',
  pErase: '<path d="M1 11l8-8h4l2 2-8 9H4z" fill="#fff" stroke="#333"/><path d="M9 3h4l2 2-4 4-4-3z" fill="#aaa"/>',
  pLine: '<path d="M1 13L15 5" stroke="#333"/>',
  pArrow: '<path d="M1 8h13M11 5l3 3-3 3" stroke="#333" fill="none"/>',
  pRect: '<rect x="1.500" y="3.500" width="13" height="9" fill="none" stroke="#222"/>',
  pRectF: '<rect x="1.500" y="3.500" width="13" height="9" fill="#999"/>',
  pOval: '<ellipse cx="8" cy="8" rx="7" ry="4.500" fill="none" stroke="#222"/>',
  pOvalF: '<ellipse cx="8" cy="8" rx="7" ry="4.500" fill="#999"/>',
  pBoth: '<path d="M1 8h14M4 5L1 8l3 3M12 5l3 3-3 3" stroke="#222" fill="none"/>',
  trWrench: '<path d="M3 14L11 5" stroke="#ccd8ee" stroke-width="3"/><path d="M9 5a4 4 0 0 1 6-3l-3 2v2h2l2-2a4 4 0 0 1-5 4z" fill="#a8c0e8"/>',
  trDot: '<circle cx="7" cy="8" r="6.500" fill="#2860c0"/><circle cx="11" cy="12" r="2" fill="#e8a020"/><circle cx="14" cy="12" r="1" fill="#d03030"/>',
  trHelp: '<circle cx="8" cy="8" r="7.500" fill="#f0f4ff"/><circle cx="8" cy="8" r="6.500" fill="#1c3ea8"/><path d="M5.800 6.200c0-2.800 4.600-2.800 4.600 0 0 1.800-2.300 1.800-2.300 3.600" stroke="#fff" stroke-width="1.600" fill="none"/><circle cx="8" cy="12" r="1" fill="#fff"/>',
  trWin: '<path d="M1 5h10v9H1zM5 5V2h10v8h-4" fill="none" stroke="#eee" stroke-width="1.600"/>',
  trShield: '<path d="M8 1l6 2v5c0 4-3 6-6 7-3-1-6-3-6-7V3z" fill="#2a90e0" stroke="#cfe8ff" stroke-width="1.200"/><path d="M5 6l3 3 3-3" stroke="#fff" fill="none" stroke-width="1.600"/>',
  trFlash: '<circle cx="8" cy="8" r="7.500" fill="#7e0d0d"/><path d="M12 4C9 4 9 6 8.500 8S7 12 4 12M6 8h4" stroke="#fff" stroke-width="1.500" fill="none"/>',
  trSwirl: '<circle cx="8" cy="8" r="7.500" fill="#1d8ae0"/><path d="M9 3L5 9h3l-1 4 4-6H8z" fill="#fff"/>',
  trMusic: '<rect x="1" y="1" width="14" height="14" fill="#c8b8e0" stroke="#eee"/><circle cx="7" cy="8" r="4" fill="#8048a0"/><circle cx="12" cy="12" r="3" fill="#d02030"/>',
  trBook: '<rect x="3" y="0" width="10" height="16" fill="#7ec820"/><path d="M5 3h6M5 6h6M5 9h6M5 12h6" stroke="#345a08"/>',
  trQQ: '<ellipse cx="7" cy="7" rx="5" ry="6" fill="#222"/><ellipse cx="7" cy="10" rx="3.500" ry="3.500" fill="#eee"/><path d="M3 12l4-2 4 2" stroke="#d02020" fill="none" stroke-width="2"/><rect x="9" y="8" width="7" height="7" fill="#e8a820"/>',
  trPlane: '<path d="M1 2l14 7-6 1-2 5z" fill="#e8e8e8"/>',
  trPlay: '<path d="M1 1h6l8 7-8 7H1z" fill="#35a8e0"/><path d="M1 1h5v14H1z" fill="#f0a020"/><path d="M6 5l6 3-6 3z" fill="#80d050"/>',
  trSpk: '<path d="M3 6h2l4-3.500v11L5 10H3z" fill="#ddd"/><path d="M11 5c1.500 2 1.500 4 0 6M13 3c2.500 3 2.500 7 0 10" stroke="#ccc" fill="none"/>',
  trPow: '<path d="M3 3h10v5l-2 3v4H6v-4L3 8z" fill="#f0f0f0" stroke="#333"/><path d="M6 0v3M10 0v3" stroke="#fff" stroke-width="1.500"/>',
  trSig: '<path d="M2 14h1.500v-2H2zM5 14h1.500V10H5zM8 14h1.500V7H8zM11 14h1.500V4H11z" fill="#eee"/>'
}

const big: Record<string, string> = {
  sketch: '<path d="M3 5l19 5v21L3 26z" fill="#d8d8d8" stroke="#555"/><path d="M6 9l6 1.500v6L6 15zM14 11l5 1.300v6L14 17zM6 17l6 1.500v5L6 22zM14 19l5 1.300v5L14 24z" fill="#eee" stroke="#555" stroke-width=".7"/><path d="M24 1l1.500 5 5-1-3.500 4 3.500 4-5-1-1.500 5-1.500-5-5 1 3.500-4-3.500-4 5 1z" fill="#f3ee62" stroke="#cbbf30" stroke-width=".5"/>',
  plane: '<path d="M3 2l25 5v24L3 25z" fill="#e4e8e4" stroke="#555"/>',
  extrude: '<path d="M2 6l12 4v17L2 22z" fill="#f4b050"/><path d="M14 10l12-4v16l-12 5z" fill="#f8c878"/><path d="M2 6l12-4 12 4-12 4z" fill="#ffd9a0"/><path d="M8 8v16M19 8v16M14 10v17" stroke="#b07020" fill="none"/><path d="M2 22l12 5 12-5-3 6-9 3-8-3z" fill="#7d97d8"/><path d="M29 24V12M27 14l2-4 2 4" stroke="#d22" fill="none" stroke-width="1.300"/>',
  hole: '<path d="M3 8l12-6 14 5v15l-14 8-12-6z" fill="#7d97e0"/><path d="M3 8l12-6 14 5-14 6z" fill="#b8c8f0"/><path d="M3 8l12 5v17L3 24z" fill="#a8b8ea"/><circle cx="9" cy="17" r="4.500" fill="#f4b040" stroke="#555"/>',
  blend: '<path d="M2 10C5 3 14 1 24 3c5 1 7 5 7 10v11l-16 7L2 25z" fill="#7d97e0"/><path d="M2 10C5 3 14 1 24 3c3 1 5 3 6 5L15 14z" fill="#dfe8f8"/><path d="M2 10l13 4v5L2 15z" fill="#f4b050"/><path d="M15 14L30 8c1 2 1 4 1 6L15 19z" fill="#f8d8a0"/><path d="M2 15l13 4v12L2 25z" fill="#e8eef8"/>',
  moveFace: '<path d="M3 9l13-8 13 8v14l-13 8-13-8z" fill="#f2b030" stroke="#8a5a20"/><path d="M16 1l13 8-13 8-13-8z" fill="#d8a0d8"/><path d="M16 17l13-8v14l-13 8z" fill="#b8a0e0"/><path d="M19 10l3.500 3h-2v4h4v-2l4 3.500-4 3.500v-2h-4v4h2L19 29l-3.500-3h2v-4h-4v2l-4-3.500 4-3.500v2h4v-4h-2z" fill="#f0f0f0" stroke="#666"/>',
  gProfile: '<path d="M3 4V20C3 30 15 30 16 20C16 6 30 6 30 18V24" fill="none" stroke="#333" stroke-width="1.500"/><circle cx="3" cy="19" r="2.500" fill="#b84040"/><circle cx="16" cy="20" r="2.500" fill="#b84040"/><circle cx="30" cy="18" r="2.500" fill="#b84040"/>',
  gRect: '<rect x="5" y="8" width="22" height="17" fill="none" stroke="#333" stroke-width="1.500"/><circle cx="5" cy="8" r="2.500" fill="#b84040"/><circle cx="27" cy="25" r="2.500" fill="#b84040"/>',
  gLine: '<path d="M5 27L27 5" stroke="#333" stroke-width="1.500"/><circle cx="5" cy="27" r="2.500" fill="#b84040"/><circle cx="27" cy="5" r="2.500" fill="#b84040"/>',
  gArc: '<path d="M4 5C16 6 25 14 27 27" fill="none" stroke="#333" stroke-width="1.500"/><circle cx="4" cy="5" r="2.500" fill="#b84040"/><circle cx="19" cy="13" r="2.500" fill="#b84040"/><circle cx="27" cy="27" r="2.500" fill="#b84040"/>',
  gCircle: '<circle cx="16" cy="16" r="14" fill="none" stroke="#333" stroke-width="1.500"/>',
  gPlus: '<path d="M16 2v28M2 16h28" stroke="#333" stroke-width="1.500"/>',
  orb: '<circle cx="16" cy="16" r="15.500" fill="#2a5f9c" stroke="#1a3a5c"/><path d="M1 16a15 15 0 0 1 30 0c-6-5-24-5-30 0z" fill="#9cc4ea" opacity=".55"/><path d="M9 11c2-1 4-1 6.500 0l-1 5c-2-1-4-1-6.500 0z" fill="#e44"/><path d="M16.500 11c2 1 4 1 6.500 0l-1 5c-2 1-4 1-6.500 0z" fill="#7b3"/><path d="M8 17c2-1 4-1 6.500 0l-1 5c-2-1-4-1-6.500 0z" fill="#38d"/><path d="M15.500 17c2 1 4 1 6.500 0l-1 5c-2 1-4 1-6.500 0z" fill="#fb2"/>',
  tFolder: '<path d="M4 8h10l3 3h12v18H4z" fill="#e8c468"/><path d="M4 14h25v15H4z" fill="#f8dc88"/><path d="M8 21h17v8H8z" fill="#58a0d8"/><path d="M12 21h9v3h-9z" fill="#c8e4f8"/>',
  tChrome: '<circle cx="16" cy="16" r="14" fill="#db4437"/><path d="M16 16L3.500 22A14 14 0 0 1 4 8z" fill="#db4437"/><path d="M16 16L8.500 28A14 14 0 0 0 29 22z" fill="#f4b400"/><path d="M16 16L3.500 22A14 14 0 0 0 16 30z" fill="#0f9d58"/><path d="M16 16h14a14 14 0 0 1-5 11z" fill="#f4b400"/><circle cx="16" cy="16" r="6.500" fill="#fff"/><circle cx="16" cy="16" r="5" fill="#4285f4"/>',
  tPlane: '<path d="M8 4l20 11-12 2-3 12z" fill="#d8208a"/><path d="M16 17l-8-13 5 25z" fill="#a8186c"/>',
  tTele: '<circle cx="16" cy="16" r="14" fill="#2a9fd6"/><path d="M6 16L25 8l-3 16-6-4-3 4-1-6z" fill="#e8f4fa"/>',
  tGlobe: '<circle cx="17" cy="18" r="11" fill="#2a8fd8"/><path d="M9 16c4-4 9-3 10 1s-4 8-8 6z" fill="#58a848"/><path d="M6 4l13 2-3 14z" fill="#c01848"/><path d="M3 28c8 3 24-3 27-14" stroke="#e8a020" stroke-width="2" fill="none"/>',
  tMap: '<rect x="3" y="1" width="26" height="30" rx="2" fill="#e8e0c0"/><path d="M3 1h12v10H3z" fill="#80c8e8"/><path d="M18 1h11v14H18z" fill="#a8d8a0"/><path d="M3 16h10v15H3z" fill="#f0c888"/><path d="M20 18h9v13h-9z" fill="#ddd"/><path d="M5 1l11 16" stroke="#c85068" stroke-width="4"/><circle cx="16" cy="17" r="3.500" fill="#c02020"/><path d="M18 18v11l3-3 4 5 2-2-4-4h4z" fill="#fff" stroke="#222"/>',
  tPlay: '<path d="M4 4h8l17 12-17 12H4z" fill="#35a8e0"/><path d="M4 4h8v24H4z" fill="#f09020"/><path d="M12 9l11 7-11 7z" fill="#9ad048"/>',
  tFlash: '<circle cx="16" cy="16" r="15" fill="#7a0c0c"/><path d="M23 8c-7 0-7 4-8 8s-2 8-8 8M11 16h9" stroke="#fff" stroke-width="3" fill="none"/>',
  tPdf: '<rect x="2" y="1" width="28" height="30" fill="#f2f2f2"/><path d="M8 25c5-3 8-11 7-18 0 9 5 13 11 14-7-1-13 0-18 4z" fill="none" stroke="#b01818" stroke-width="1.500"/>',
  tNote: '<path d="M7 3l20 3-3 24L4 26z" fill="#a8d8f0"/><path d="M7 3l20 3-1 6L6 9z" fill="#d8eef8"/><path d="M4 26l20 4 3-24-1 26z" fill="#78a8b8"/>',
  tCad: '<rect x="1" y="1" width="30" height="30" fill="#e84848"/><rect x="1" y="1" width="30" height="30" fill="#f8d0d0" opacity=".35"/><path d="M16 5l10 21h-6l-4-10-4 10H6z" fill="#8c1818"/>',
  tMap2: '<rect x="3" y="1" width="26" height="30" fill="#a8a888" opacity=".8"/><path d="M5 1l11 16" stroke="#b06850" stroke-width="4"/><circle cx="16" cy="17" r="3.500" fill="#a04020"/><path d="M18 18v11l3-3 4 5 2-2-4-4h4z" fill="#999" stroke="#333"/>'
}

const Ico = (p: { n: string; s?: number }) => {
  const size = p.s ?? 16
  const isBig = p.n in big
  return h('svg', {
    width: size,
    height: size,
    viewBox: isBig ? '0 0 32 32' : '0 0 16 16',
    class: 'ico',
    innerHTML: isBig ? big[p.n] : ic[p.n]
  })
}
Ico.props = ['n', 's']

const tabs = ['主页', '装配', '曲线', '曲面', '分析', '视图', '渲染', '工具', '应用模块', '动画设计']
const gallery = ['gProfile', 'gRect', 'gLine', 'gArc', 'gCircle', 'gPlus']

// suffix * = toggled on, ^ = 18px cell, ~ = 22px cell
const tools = [
  't1', 't2', 't3^', 'v', 't4', 't5', 't6', 't7', 'v', 't8', 't9',
  't10*', 't11*', 't12*', 't13', 't14*', 't15*', 't16', 't17*', 't18', 't19*', 't20*', 't21', 't22', 't23',
  '|', 't24', 't25', 't26', 't27', 't28', 't29', 'v', 't30~', 'v', 't31~', 'v', 't32~', 'v', '|'
]
const toolName = (t: string) => t.replace(/[*^~]/, '')
const toolClass = (t: string) => ({ on: t.endsWith('*'), nar18: t.endsWith('^'), nar22: t.endsWith('~') })

interface Row { text?: string; exp?: string; check?: string; icon?: string; cls?: string }
const rows: Row[] = [
  { text: '模型视图', exp: '+', icon: 'views', cls: 'r-top' },
  { text: '摄像机', exp: '+', check: 'check', icon: 'cam', cls: 'r-top' },
  { text: '图纸', exp: '+', check: 'check', icon: 'drawing', cls: 'r-top' },
  { text: '模型历史记录', exp: '−', icon: 'folder', cls: 'r-top' },
  { text: '基准坐标系 (0)', check: 'box', icon: 'csys', cls: 'r-sub muted' },
  { text: '块 (1)', check: 'box', icon: 'block', cls: 'r-sub strong' },
  ...Array.from({ length: 17 }, () => ({}))
]

const swatches = [
  ['linear-gradient(135deg,#fff,#f00)', '#f00'],
  ['linear-gradient(135deg,#fff,#ff0)', '#ff0'],
  ['linear-gradient(135deg,#fff,#0f0)', '#0f0'],
  ['linear-gradient(135deg,#fff,#00f)', '#00f'],
  ['#fff', '#000']
]
</script>

<style>
html, body { margin: 0; overflow: hidden; }
</style>

<style scoped>
.app {
  position: relative;
  width: 1366px;
  height: 768px;
  display: flex;
  flex-direction: column;
  overflow: hidden;
  background: #fff;
  color: #333;
  font: 12px "Noto Sans CJK SC", "Liberation Sans", sans-serif;
}
.ico { flex: none; display: block; }
i { display: block; font-style: normal; }
.caret {
  flex: none;
  width: 0;
  height: 0;
  border-left: 3px solid transparent;
  border-right: 3px solid transparent;
  border-top: 3px solid #222;
}
.caret.up { border-top: 0; border-bottom: 3px solid #bbb; }
.caret.dark { border-bottom-color: #222; border-left-width: 5px; border-right-width: 5px; border-bottom-width: 5px; }
.caret.white { border-top-color: #eee; }
.overflow {
  flex: none;
  width: 7px;
  height: 6px;
  border-top: 1px solid #222;
  position: relative;
}
.overflow::after {
  content: "";
  display: block;
  margin: 2px auto 0;
  width: 0;
  height: 0;
  border-left: 3px solid transparent;
  border-right: 3px solid transparent;
  border-top: 3px solid #222;
}

/* title bar */
.titlebar { flex: none; height: 27px; display: flex; align-items: center; padding-left: 4px; padding-right: 8px; }
.nx { width: 37px; font: bold 24px/27px "Liberation Sans", sans-serif; color: #8d9ca6; letter-spacing: -.5px; }
.qa { height: 22px; display: flex; align-items: center; gap: 8px; border-left: 1px solid #e2e2e2; }
.qa-save { padding-left: 10px; width: 31px; box-sizing: border-box; }
.qa-undo { padding-left: 8px; width: 65px; box-sizing: border-box; }
.qa-clip { padding-left: 7px; width: 74px; box-sizing: border-box; }
.qa-brush { padding-left: 7px; width: 41px; box-sizing: border-box; }
.qa-roll { padding-left: 5px; width: 29px; box-sizing: border-box; }
.qa-win { padding-left: 6px; gap: 5px; }
.qa-w2 { margin-left: 2px; }
.qa-text { font-size: 11px; white-space: nowrap; color: #222; }
.apptitle { margin-left: auto; font: 12.5px "Noto Sans CJK SC", sans-serif; color: #333; }
.siemens { margin-left: auto; width: 87px; font: bold 12px "DejaVu Sans", sans-serif; color: #1f9b97; letter-spacing: .1px; }
.winbtns { display: flex; align-items: center; gap: 8px; }

/* tabs */
.tabs { flex: none; height: 27px; display: flex; background: #d9d9d9; font-size: 13px; line-height: 26px; color: #333; }
.tab-file { width: 81px; margin-right: 1px; background: #50a0b6; color: #e8f6f8; text-align: center; }
.tab { padding: 0 13px; }
.tab.on { background: #fff; color: #167c92; padding: 0 13.5px; }
.tabs-right { margin-left: auto; display: flex; align-items: center; gap: 12px; padding-right: 8px; }
.search {
  width: 125px;
  height: 19px;
  box-sizing: border-box;
  margin-right: -1px;
  display: flex;
  align-items: center;
  justify-content: space-between;
  padding: 0 2px;
  background: #fff;
  border: 1px solid #aaa;
  font-size: 11px;
  color: #aaa;
}

/* ribbon */
.ribbon { flex: none; height: 93px; display: flex; font-size: 11px; color: #333; }
.group { display: flex; flex-direction: column; border-right: 1px solid #e6e6e6; box-sizing: border-box; height: 90px; }
.g1 { width: 179px; }
.g2 { width: 368px; }
.g3 { width: 245px; }
.g4 { width: 104px; }
.g5 { width: 52px; }
.g6 { width: 59px; }
.gbody { height: 76px; display: flex; }
.glabel { height: 14px; display: flex; align-items: center; padding-right: 9px; color: #1f8ba0; }
.glabel span { flex: 1; text-align: center; white-space: nowrap; }
.g1 .gbody { padding-left: 8px; }
.g2 .gbody { padding-left: 10px; }
.g3 .gbody { padding-left: 2px; }
.lg { display: flex; flex-direction: column; align-items: center; padding-top: 4px; flex: none; white-space: nowrap; }
.lg span { margin-top: 6px; line-height: 14px; }
.lg .caret { margin-top: 5px; }
.w32 { width: 32px; }
.w38 { width: 38px; }
.w40 { width: 40px; }
.w42 { width: 42px; }
.w44 { width: 45px; }
.w46 { width: 46px; }
.w50 { width: 50px; }
.gallery {
  margin: 5px 0 0 7px;
  width: 99px;
  height: 66px;
  box-sizing: border-box;
  border: 1px solid #dcdcdc;
  display: grid;
  grid-template-columns: repeat(3, 1fr);
  grid-template-rows: 1fr 1fr;
}
.gcell { display: flex; align-items: center; justify-content: center; }
.gscroll { width: 16px; margin-left: 1px; display: flex; flex-direction: column; align-items: center; padding-top: 14px; gap: 18px; }
.col { flex: none; padding-top: 1px; }
.c1 { width: 70px; margin-left: 12px; }
.c2 { width: 60px; margin-left: 5px; }
.c3 { width: 83px; margin-left: 2px; }
.c4 { width: 60px; }
.sm { height: 22px; display: flex; align-items: center; gap: 5px; white-space: nowrap; }
.sm .caret { margin-left: 6px; }
.more { margin-left: 4px; padding-top: 5px; }
.more span { margin-top: 4px; }
.morebox {
  width: 38px;
  height: 33px;
  box-sizing: border-box;
  border: 1px solid #e4e4e4;
  border-radius: 3px;
  display: flex;
  align-items: center;
  justify-content: center;
}
.icons2 { flex-direction: column; padding: 6px 0 0 5px; }
.irow { height: 30px; display: flex; align-items: center; gap: 8px; }
.g5 .icons2 { padding-left: 6px; }
.g6 .icons2 { padding-left: 6px; }
.vsep { width: 1px; height: 24px; background: #e4e4e4; margin: 0 -2px; }
.gend { flex: 1; display: flex; align-items: flex-end; justify-content: flex-end; padding: 0 5px 8px 0; }

/* selection bar */
.selbar {
  flex: none;
  height: 33px;
  box-sizing: border-box;
  display: flex;
  align-items: center;
  padding-left: 10px;
  border-top: 1px solid #e4e4e4;
  border-bottom: 2px solid #8e8e8e;
}
.menu-text { margin: 0 5px 0 3px; font-size: 12px; }
.tsep { flex: none; width: 1px; height: 22px; background: #d4d4d4; }
.tsep.first { margin: 0 12px 0 3px; }
.combo {
  flex: none;
  height: 20px;
  box-sizing: border-box;
  padding: 0 6px 0 3px;
  display: flex;
  align-items: center;
  justify-content: space-between;
  border: 1px solid #aaa;
  font-size: 12px;
}
.c-a { width: 133px; margin-right: 9px; }
.c-b { width: 139px; }
.combo .caret { border-left-width: 4px; border-right-width: 4px; border-top-width: 4px; }
.tools { display: flex; align-items: center; margin-left: 5px; }
.tcell { flex: none; width: 25px; height: 24px; display: flex; align-items: center; justify-content: center; }
.tcell.on { background: #c6dee6; box-shadow: inset -1px 0 0 #fff; }
.tcell.nar18 { width: 18px; }
.tcell.nar22 { width: 22px; }
.tcaret { margin: 0 4px; }
.tools .tsep { margin: 0 8px 0 5px; }
.caret.end { margin-left: auto; margin-right: 5px; align-self: flex-end; margin-bottom: 5px; }

/* main */
.main { flex: 1; min-height: 0; display: flex; }
.rail {
  flex: none;
  width: 32px;
  box-sizing: border-box;
  background: #e8e8e8;
  display: grid;
  grid-template-rows: 26px 16px 42px 42px 42px 44px 40px 40px 70px 40px 14px 38px 6px 14px 17px 16px 16px;
  justify-items: center;
  align-items: center;
}
.rail > span { display: flex; align-items: center; justify-content: center; width: 100%; height: 100%; }
.r-on { background: #fff; margin-left: 2px; border: 1px solid #ccc; border-right: 0; box-sizing: border-box; }
.nav { flex: none; width: 201px; box-sizing: border-box; display: flex; flex-direction: column; padding: 0 11px 7px 8px; background: #fff; border-right: 1px solid #ddd; }
.nav-title { height: 27px; margin-bottom: 2px; flex: none; display: flex; align-items: center; justify-content: space-between; padding-left: 2px; padding-right: 6px; font-size: 12px; }
.nav-max { width: 10px; height: 8px; border: 1px solid #222; border-top-width: 2px; }
.tree { flex: 1; min-height: 0; display: flex; flex-direction: column; }
.tree-head { flex: none; height: 21px; display: flex; align-items: center; gap: 15px; padding-left: 6px; background: #f0f0f0; border-bottom: 1px solid #ddd; font-size: 12px; }
.tree-body { position: relative; flex: 1; min-height: 0; overflow: hidden; }
.tree-lines { position: absolute; left: 0; top: 0; }
.row {
  position: relative;
  height: 20px;
  box-sizing: border-box;
  display: flex;
  align-items: center;
  gap: 2px;
  border-bottom: 1px solid #f1f1f1;
  font-size: 12px;
  color: #333;
  white-space: nowrap;
}
.r-top { padding-left: 5px; }
.r-sub { padding-left: 40px; }
.row-text { margin-left: 1px; }
.exp {
  flex: none;
  width: 9px;
  height: 9px;
  margin-right: 4px;
  box-sizing: border-box;
  border: 1px solid #ccc;
  background: #fff;
  font: 9px/7px "Liberation Mono", monospace;
  color: #111;
  text-align: center;
}
.muted { color: #aaa; }
.strong { font-weight: bold; }
.hscroll { flex: none; height: 18px; display: flex; align-items: center; background: #f0f0f0; gap: 5px; padding: 0 6px; }
.tri { width: 0; height: 0; border-top: 4px solid transparent; border-bottom: 4px solid transparent; }
.tri.l { border-right: 4px solid #444; }
.tri.r { border-left: 4px solid #444; margin-left: auto; }
.thumb { width: 8px; height: 14px; background: #e8e8e8; border: 1px solid #bbb; }
.hfoot { flex: none; height: 4px; border: 1px solid #aaa; background: #e4e4e4; margin-top: 1px; }
.view { flex: 1; min-width: 0; display: flex; flex-direction: column; }
.doc-tabs { flex: none; height: 23px; box-sizing: border-box; border-bottom: 2px solid #5f9ea9; }
.doc-tab { width: 132px; height: 21px; display: flex; align-items: center; padding-left: 6px; gap: 5px; box-sizing: border-box; background: #50a0b6; font: 12.5px "Open Sans", sans-serif; color: #eefafc; }
.canvas { flex: 1; background: linear-gradient(#b3b5b5, #e9eaeb); }

/* status */
.status { flex: none; height: 21px; box-sizing: border-box; display: flex; align-items: center; justify-content: space-between; padding-left: 3px; padding-right: 54px; border-top: 1px solid #bbb; font-size: 11.3px; color: #222; }
.status-r { display: flex; gap: 7px; }

/* taskbar */
.taskbar {
  flex: none;
  height: 40px;
  box-sizing: border-box;
  display: flex;
  border-top: 1px solid #222;
  background: linear-gradient(90deg, #3c4526 0, #3e4628 200px, #4a4f30 280px, #2d3a1c 450px, #3c4226 500px, #3f4426 560px, #3a3f24 760px, #3a4220 860px, #6a6a4c 905px, #3a4522 1000px, #2e3a1a 1270px, #4a5030 1345px);
}
.orb { flex: none; width: 119px; padding: 0 0 0 7px; box-sizing: border-box; display: flex; align-items: center; }
.tb-btn { flex: none; width: 54px; margin-right: 3px; display: flex; align-items: center; justify-content: center; box-sizing: border-box; }
.framed { background: linear-gradient(rgba(255,255,255,.28), rgba(255,255,255,.08)); border: 1px solid rgba(255,255,255,.25); border-radius: 3px; }
.active { background: linear-gradient(rgba(255,255,255,.75), rgba(255,255,255,.45)); }
.t-exp { width: 52px; justify-content: flex-end; margin-right: 3px; padding-right: 4px; box-shadow: 3px 0 0 -1px rgba(255,255,255,.14); }
.t-flash { width: 51px; }
.t-pdf { width: 48px; margin-right: 7px; box-shadow: 3px 0 0 -1px rgba(255,255,255,.14); }
.t-note { width: 45px; margin-right: 13px; }
.t-cad { width: 51px; margin-right: 4px; }
.t-map2 { width: 52px; }
.fw { width: 27px; height: 27px; box-sizing: border-box; border: 2px solid #d8d040; background: #1a1a10; color: #e8e050; font: bold 15px/23px "Liberation Sans", sans-serif; text-align: center; }
.tray { flex: none; margin-left: 6px; display: flex; align-items: center; color: #eee; }
.tray > span { display: flex; align-items: center; justify-content: center; }
.tr-a { width: 21.5px; }
.tr-b { width: 24.2px; }
.tr-jp { font: 11px "Liberation Serif", serif; }
.tr-capA { font: 15px "Liberation Serif", serif; }
.tr-caps { flex-direction: column; width: 28px; gap: 1px; margin-left: 3px; }
.tr-caps b { font: 7px/11px "DejaVu Sans Mono", monospace; color: #eee; }
.tr-capsico { flex-direction: column; width: 14px; gap: 6px; }
.clock { flex: 1; display: flex; flex-direction: column; align-items: center; justify-content: center; gap: 1px; font: 13px/18px "Open Sans", sans-serif; color: #e6e6e0; }
.showdesk { flex: none; width: 13px; background: rgba(255,255,255,.14); border-left: 1px solid rgba(0,0,0,.4); }

/* overlays */
.scene { position: absolute; left: 0; top: 0; pointer-events: none; }
.ink path { fill: none; stroke: #f00; stroke-width: 6.5; stroke-linecap: round; stroke-linejoin: round; }
.tz { font: 12px "Liberation Sans", sans-serif; fill: #3d6db8; }
.ty { font: 12px "Liberation Sans", sans-serif; fill: #3f8a4a; }
.meter { position: absolute; left: 1205px; top: 475px; width: 119px; height: 60px; display: flex; align-items: center; }
.meter-rates { width: 90px; height: 42px; box-sizing: border-box; padding: 3px 0 0 11px; border-radius: 21px 0 0 21px; background: #2b3140; }
.rate { display: flex; align-items: center; gap: 6px; height: 19px; font: 11.5px "Open Sans", sans-serif; color: #cfd2d8; }
.rate small { font-size: 9.5px; color: #9aa0aa; }
.arrow { width: 0; height: 0; border-left: 3.500px solid transparent; border-right: 3.500px solid transparent; border-top: 6px solid #3d9a4a; }
.arrow.up { border-top: 0; border-bottom: 6px solid #b8b8b0; }
.meter-dial { position: relative; flex: none; margin-left: -31px; width: 60px; height: 60px; border-radius: 50%; background: #474c58; display: flex; align-items: center; justify-content: center; font: 300 25px "Open Sans", sans-serif; color: #e4e6ea; }
.meter-dial svg { position: absolute; left: 0; top: 0; }
.meter-dial small { font-size: 10px; }
.spot { position: absolute; left: 1170px; top: 463px; width: 55px; height: 55px; border-radius: 50%; background: rgba(240, 235, 40, .46); }
.cursor { position: absolute; left: 1191px; top: 478px; }

.palette {
  position: absolute;
  left: 62px;
  top: 417px;
  width: 68px;
  height: 365px;
  box-sizing: border-box;
  padding: 0 5px;
  background: linear-gradient(90deg, #bcbcc0, #ececec 5px, #f0f0f0 62px, #b8b8bc);
  border: 1px solid #777;
  border-radius: 3px;
}
.pal-title { height: 25px; display: flex; align-items: center; justify-content: space-between; font: 13px "Open Sans", sans-serif; color: #333; padding-left: 2px; }
.pal-close { width: 18px; height: 18px; box-sizing: border-box; margin-right: 1px; border: 1px solid #999; border-radius: 2px; background: #f8f8f8; font: 12px/15px "Liberation Sans", sans-serif; color: #444; text-align: center; }
.pal-inner { width: 56px; box-sizing: border-box; border: 1px solid #555; background: #f0f0f0; padding: 1px; }
.pal-exit { display: block; width: 52px; height: 27px; box-sizing: border-box; padding: 0; border: 2px solid #777; background: #eee; font: 14px "Noto Sans CJK SC", sans-serif; color: #111; }
.pal-inner hr { border: 0; border-top: 1px solid #aaa; margin: 3px 3px 3px; }
.pal-grid { display: grid; grid-template-columns: 24px 24px; grid-auto-rows: 23px; gap: 0 1px; padding-left: 1px; margin-top: 3px; }
.swatches { grid-auto-rows: 24px; margin-top: 6px; }
.pal-tools { grid-auto-rows: 24px; margin-top: 5px; }
.cell { display: flex; align-items: center; justify-content: center; }
.sel { background: #f8f8f8; box-shadow: inset 1px 1px 0 #bbb; }
.dot { border-radius: 50%; background: #706f68; }
.d1 { width: 4px; height: 4px; }
.d2 { width: 8px; height: 8px; }
.d3 { width: 12px; height: 12px; }
.d4 { width: 16px; height: 16px; }
.sw { width: 18px; height: 18px; }
.pal-a { font: 15px "Liberation Sans", sans-serif; color: #222; }
.tooltip { position: absolute; left: 1115px; top: 711px; width: 86px; height: 34px; box-sizing: border-box; display: flex; align-items: center; justify-content: center; padding-right: 6px; background: #f1f1f1; border: 1px solid #aaa; font-size: 13px; color: #333; }
</style>
